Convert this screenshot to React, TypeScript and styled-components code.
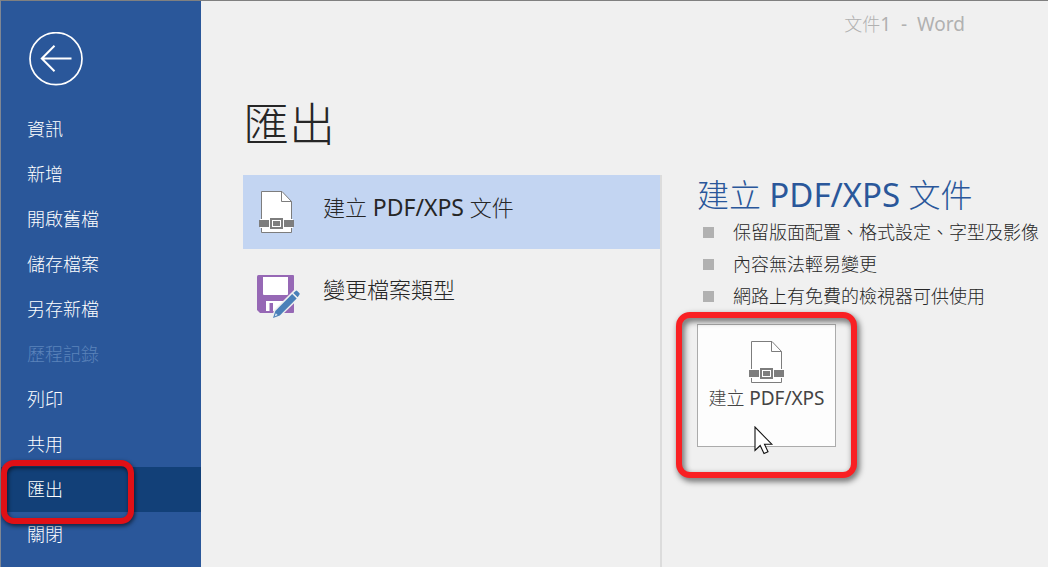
import React from "react";
import styled, { createGlobalStyle, css } from "styled-components";

const GlobalStyle = createGlobalStyle`
  *, *::before, *::after { box-sizing: border-box; }
  body {
    margin: 0;
    background: #f0f0f0;
    color: #262626;
    font-family: "Noto Sans", "Noto Sans CJK TC", sans-serif;
    font-size: 18px;
    font-weight: 300;
  }
  button { font: inherit; color: inherit; cursor: pointer; }
  h1, h2, ul { margin: 0; padding: 0; font-weight: 300; }
`;

const Latin = styled.span`
  font-size: calc(1em + 1px);
  font-weight: 400;
`;

const Window = styled.div`
  display: flex;
  min-height: 100vh;
  border-top: 1px solid #808080;
  border-left: 1px solid #7f8794;
`;

const Sidebar = styled.aside`
  flex: 0 0 200px;
  padding-top: 31px;
  background: #2a579a;
  color: #ffffff;
`;

const BackButton = styled.button`
  display: block;
  margin: 0 0 21px 28px;
  padding: 0;
  border: 0;
  background: none;

  svg { display: block; }
`;

const NavItem = styled.li`
  position: relative;
  list-style: none;
`;

const NavButton = styled.button<{ $active?: boolean }>`
  display: block;
  width: 100%;
  height: 45px;
  padding: 0 26px;
  border: 0;
  background: ${(p) => (p.$active ? "#124078" : "transparent")};
  line-height: 45px;
  text-align: left;

  &:disabled { color: #5b83ba; cursor: default; }
`;

const Marker = styled.span<{ $kind: "nav" | "action" }>`
  position: absolute;
  border-style: solid;
  border-width: 6px;
  pointer-events: none;
  z-index: 1;
  ${(p) =>
    p.$kind === "nav"
      ? css`
          inset: -7px 67px -12px 0;
          border-color: #e01016;
          border-radius: 13px;
          filter: drop-shadow(1px 2px 2px rgba(0, 0, 0, 0.6));
        `
      : css`
          inset: -12px -21px -31px -21px;
          border-color: #f92023;
          border-radius: 14px;
          filter: drop-shadow(2px 3px 3px rgba(0, 0, 0, 0.65));
        `}
`;

const Main = styled.main`
  flex: 1;
  min-width: 0;
  display: flex;
  flex-direction: column;
  padding-left: 42px;
`;

const DocumentTitle = styled.div`
  height: 36px;
  padding: 10px 83px 0 0;
  color: #b1b1b1;
  line-height: 26px;
  text-align: right;
  white-space: pre;
`;

const PageHeading = styled.h1`
  margin: 54px 0 20px;
  font-size: 46px;
  line-height: 64px;
`;

const Columns = styled.div`
  flex: 1;
  display: flex;
`;

const Options = styled.div`
  flex: 0 1 419px;
  display: flex;
  flex-direction: column;
  gap: 8px;
  border-right: 2px solid #dcdcdc;
`;

const Option = styled.button<{ $selected?: boolean }>`
  display: flex;
  align-items: center;
  gap: 20px;
  width: 100%;
  height: 74px;
  padding: 0 14px;
  border: 0;
  background: ${(p) => (p.$selected ? "#c3d5f2" : "transparent")};
  text-align: left;

  svg { flex: none; }
`;

const OptionLabel = styled.span`
  padding-bottom: 10px;
  font-size: 22px;
  line-height: 32px;
`;

const Detail = styled.section`
  flex: 1;
  min-width: 0;
  padding-left: 35px;
`;

const DetailHeading = styled.h2`
  height: 41px;
  color: #2a579a;
  font-size: 32px;
  line-height: 40px;
  white-space: nowrap;
`;

const Feature = styled.li`
  display: flex;
  align-items: center;
  gap: 19px;
  padding-left: 6px;
  line-height: 32px;
  list-style: none;

  &::before {
    content: "";
    flex: none;
    width: 11px;
    height: 11px;
    background: #b1b1b1;
  }
`;

const Action = styled.div`
  position: relative;
  width: fit-content;
  margin-top: 12px;
`;

const ActionButton = styled.button`
  display: flex;
  flex-direction: column;
  align-items: center;
  gap: 2px;
  width: 139px;
  height: 123px;
  padding: 16px 0 0;
  border: 1px solid #ababab;
  background: #fdfdfd;
  color: #444444;
  line-height: 24px;
  white-space: nowrap;
`;

const Pointer = styled.svg`
  position: absolute;
  left: 57px;
  top: 102px;
  z-index: 2;
  pointer-events: none;
`;

function BackIcon() {
  return (
    <svg width="54" height="54" viewBox="0 0 54 54" fill="none" stroke="#fff" strokeWidth="2">
      <circle cx="27" cy="26.7" r="26" strokeWidth="1.7" />
      <path d="M42.5 26.5H13M25.5 13.8 12.8 26.5 25.5 39.2" />
    </svg>
  );
}

function PdfIcon({ width = 46 }: { width?: number }) {
  const left = width === 46 ? -2 : 0;
  return (
    <svg width={width} height="43" viewBox={`${left} 0 ${width} 43`}>
      <path d="M2.5.5H23L32.5 10.5V41.5H2.5Z" fill="#fff" stroke="#7d7d7d" />
      <path d="M22.5.5V10.5H32.5" fill="none" stroke="#7d7d7d" />
      <path d="M1 28H34V37H1Z" fill="#fff" />
      <path d="M0 29H10V36H0ZM25 29H35V36H25Z" fill="#7d7d7d" />
      <rect x="10" y="26" width="15" height="13" fill="#fff" />
      <rect x="12" y="28" width="11" height="9" fill="#fff" stroke="#7d7d7d" strokeWidth="2" />
      <rect x="14" y="30" width="7" height="5" fill="#7d7d7d" />
    </svg>
  );
}

function SaveAsIcon() {
  return (
    <svg width="46" height="48" viewBox="0 0 46 48">
      <path
        d="M1.5 5H36Q37 5 37 6V42Q37 43 36 43H3L0 40V6.500Q0 5 1.500 5Z"
        fill="#9668b5"
      />
      <path d="M6 7H31V24Q31 25 30 25H7Q6 25 6 24Z" fill="#fff" />
      <path d="M9 31H28V41H16V33H12.500V41H9Z" fill="#fff" />
      <path d="M14.500 49.500 17 40 38 19 44.500 23 43.500 27 24 46Z" fill="#f0f0f0" />
      <path d="M16 48 18.300 41 35.200 24.100 39.700 28.600 22.800 45.500Z" fill="#4a80b8" />
      <path d="M36.300 23 39 20.700Q39.600 20.300 40.200 20.900L42.500 23.300Q43 23.900 42.500 24.600L40.700 27.300Z" fill="#4a80b8" />
      <path d="M17.600 46.400 18.800 43.200 20.700 45.100Z" fill="#dce8f5" />
    </svg>
  );
}

const navItems: { label: string; disabled?: boolean; active?: boolean }[] = [
  { label: "資訊" },
  { label: "新增" },
  { label: "開啟舊檔" },
  { label: "儲存檔案" },
  { label: "另存新檔" },
  { label: "歷程記錄", disabled: true },
  { label: "列印" },
  { label: "共用" },
  { label: "匯出", active: true },
  { label: "關閉" },
];

const features = [
  "保留版面配置、格式設定、字型及影像",
  "內容無法輕易變更",
  "網路上有免費的檢視器可供使用",
];

export default function App() {
  return (
    <Window lang="zh-Hant">
      <GlobalStyle />
      <Sidebar>
        <BackButton aria-label="返回">
          <BackIcon />
        </BackButton>
        <nav>
          <ul>
            {navItems.map((item) => (
              <NavItem key={item.label}>
                <NavButton $active={item.active} disabled={item.disabled}>
                  {item.label}
                </NavButton>
                {item.active && <Marker $kind="nav" />}
              </NavItem>
            ))}
          </ul>
        </nav>
      </Sidebar>
      <Main>
        <DocumentTitle>
          文件<Latin>{"1  -  Word"}</Latin>
        </DocumentTitle>
        <PageHeading>匯出</PageHeading>
        <Columns>
          <Options>
            <Option $selected>
              <PdfIcon />
              <OptionLabel>
                建立 <Latin>PDF/XPS</Latin> 文件
              </OptionLabel>
            </Option>
            <Option>
              <SaveAsIcon />
              <OptionLabel>變更檔案類型</OptionLabel>
            </Option>
          </Options>
          <Detail>
            <DetailHeading>
              建立 <Latin>PDF/XPS</Latin> 文件
            </DetailHeading>
            <ul>
              {features.map((text) => (
                <Feature key={text}>{text}</Feature>
              ))}
            </ul>
            <Action>
              <ActionButton>
                <PdfIcon width={35} />
                <span>
                  建立 <Latin>PDF/XPS</Latin>
                </span>
              </ActionButton>
              <Marker $kind="action" />
              <Pointer width="20" height="29" viewBox="0 0 20 29">
                <path
                  d="M1 1V24.500L6.200 19.500 10 27.500 14 25.800 10.500 18.200H17.800Z"
                  fill="#fff"
                  stroke="#111"
                  strokeWidth="1.100"
                />
              </Pointer>
            </Action>
          </Detail>
        </Columns>
      </Main>
    </Window>
  );
}
